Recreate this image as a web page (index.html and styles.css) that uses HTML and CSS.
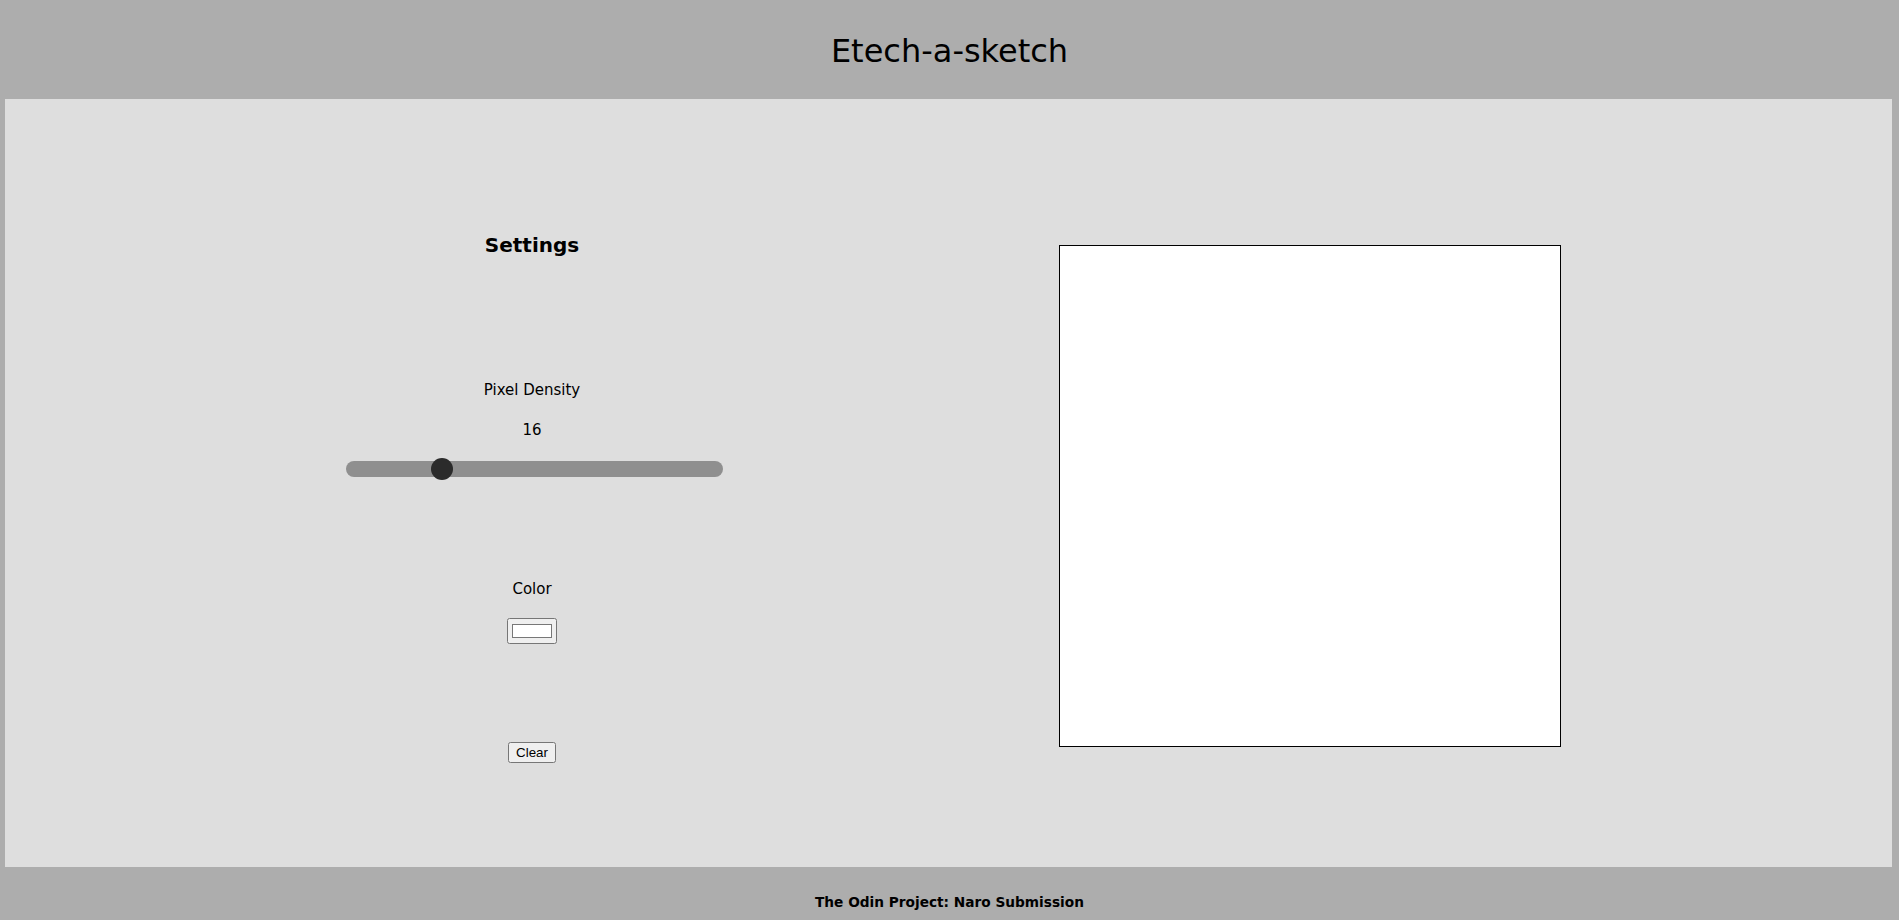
FILE: index.html
```html
<!DOCTYPE html>
<html lang="en">
<head>
<meta charset="utf-8">
<title>Etech-a-sketch</title>
<link rel="stylesheet" href="styles.css">
</head>
<body>
<header class="site-header">
  <h1 class="site-title">Etech-a-sketch</h1>
</header>
<main class="board">
  <section class="settings">
    <h2 class="settings-title">Settings</h2>
    <div class="field-label density-label">Pixel Density</div>
    <div class="field-value">16</div>
    <input class="density-slider" type="range" min="1" max="64" value="16">
    <div class="field-label color-label">Color</div>
    <input class="color-picker" type="color" value="#ffffff">
    <button class="clear-btn" type="button">Clear</button>
  </section>
  <section class="sketch-area">
    <div class="sketch-canvas"></div>
  </section>
</main>
<footer class="site-footer">The Odin Project: Naro Submission</footer>
</body>
</html>
```
FILE: styles.css
```css
html, body {
  margin: 0;
  padding: 0;
}
body {
  background: #adadad;
  font-family: "DejaVu Sans", "Liberation Sans", sans-serif;
  color: #000;
  height: 920px;
  overflow: hidden;
}
.site-header {
  height: 99px;
  box-sizing: border-box;
  padding-top: 3px;
  text-align: center;
}
.site-title {
  margin: 0;
  font-size: 32px;
  font-weight: normal;
  line-height: 96px;
}
.board {
  background: #dedede;
  height: 768px;
  box-sizing: border-box;
  margin: 0 7px 0 5px;
  padding-top: 134px;
  display: flex;
  justify-content: space-evenly;
  align-items: flex-start;
}
.settings {
  width: 392px;
  display: flex;
  flex-direction: column;
  align-items: center;
}
.settings-title {
  margin: 0;
  font-size: 20px;
  font-weight: bold;
  line-height: 24px;
}
.field-label,
.field-value {
  font-size: 15px;
  line-height: 18px;
}
.density-label {
  margin-top: 124px;
}
.field-value {
  margin-top: 22px;
}
.density-slider {
  -webkit-appearance: none;
  appearance: none;
  width: 377px;
  height: 16px;
  margin: 22px 0 0 5px;
  padding: 0;
  background: #8f8f8f;
  border-radius: 8px;
  outline: none;
}
.density-slider::-webkit-slider-thumb {
  -webkit-appearance: none;
  appearance: none;
  width: 22px;
  height: 22px;
  border-radius: 50%;
  background: #2b2b2b;
  border: none;
}
.color-label {
  margin-top: 103px;
}
.color-picker {
  margin: 20px 0 0 0;
  width: 50px;
  height: 26px;
}
.clear-btn {
  margin-top: 98px;
  font-family: "Liberation Sans", Arial, sans-serif;
  font-size: 13.33px;
}
.sketch-area {
  margin-top: 12px;
}
.sketch-canvas {
  width: 500px;
  height: 500px;
  background: #fff;
  border: 1px solid #000;
}
.site-footer {
  height: 53px;
  box-sizing: border-box;
  padding-top: 25px;
  text-align: center;
  font-size: 13.7px;
  font-weight: bold;
  line-height: 20px;
}
```
